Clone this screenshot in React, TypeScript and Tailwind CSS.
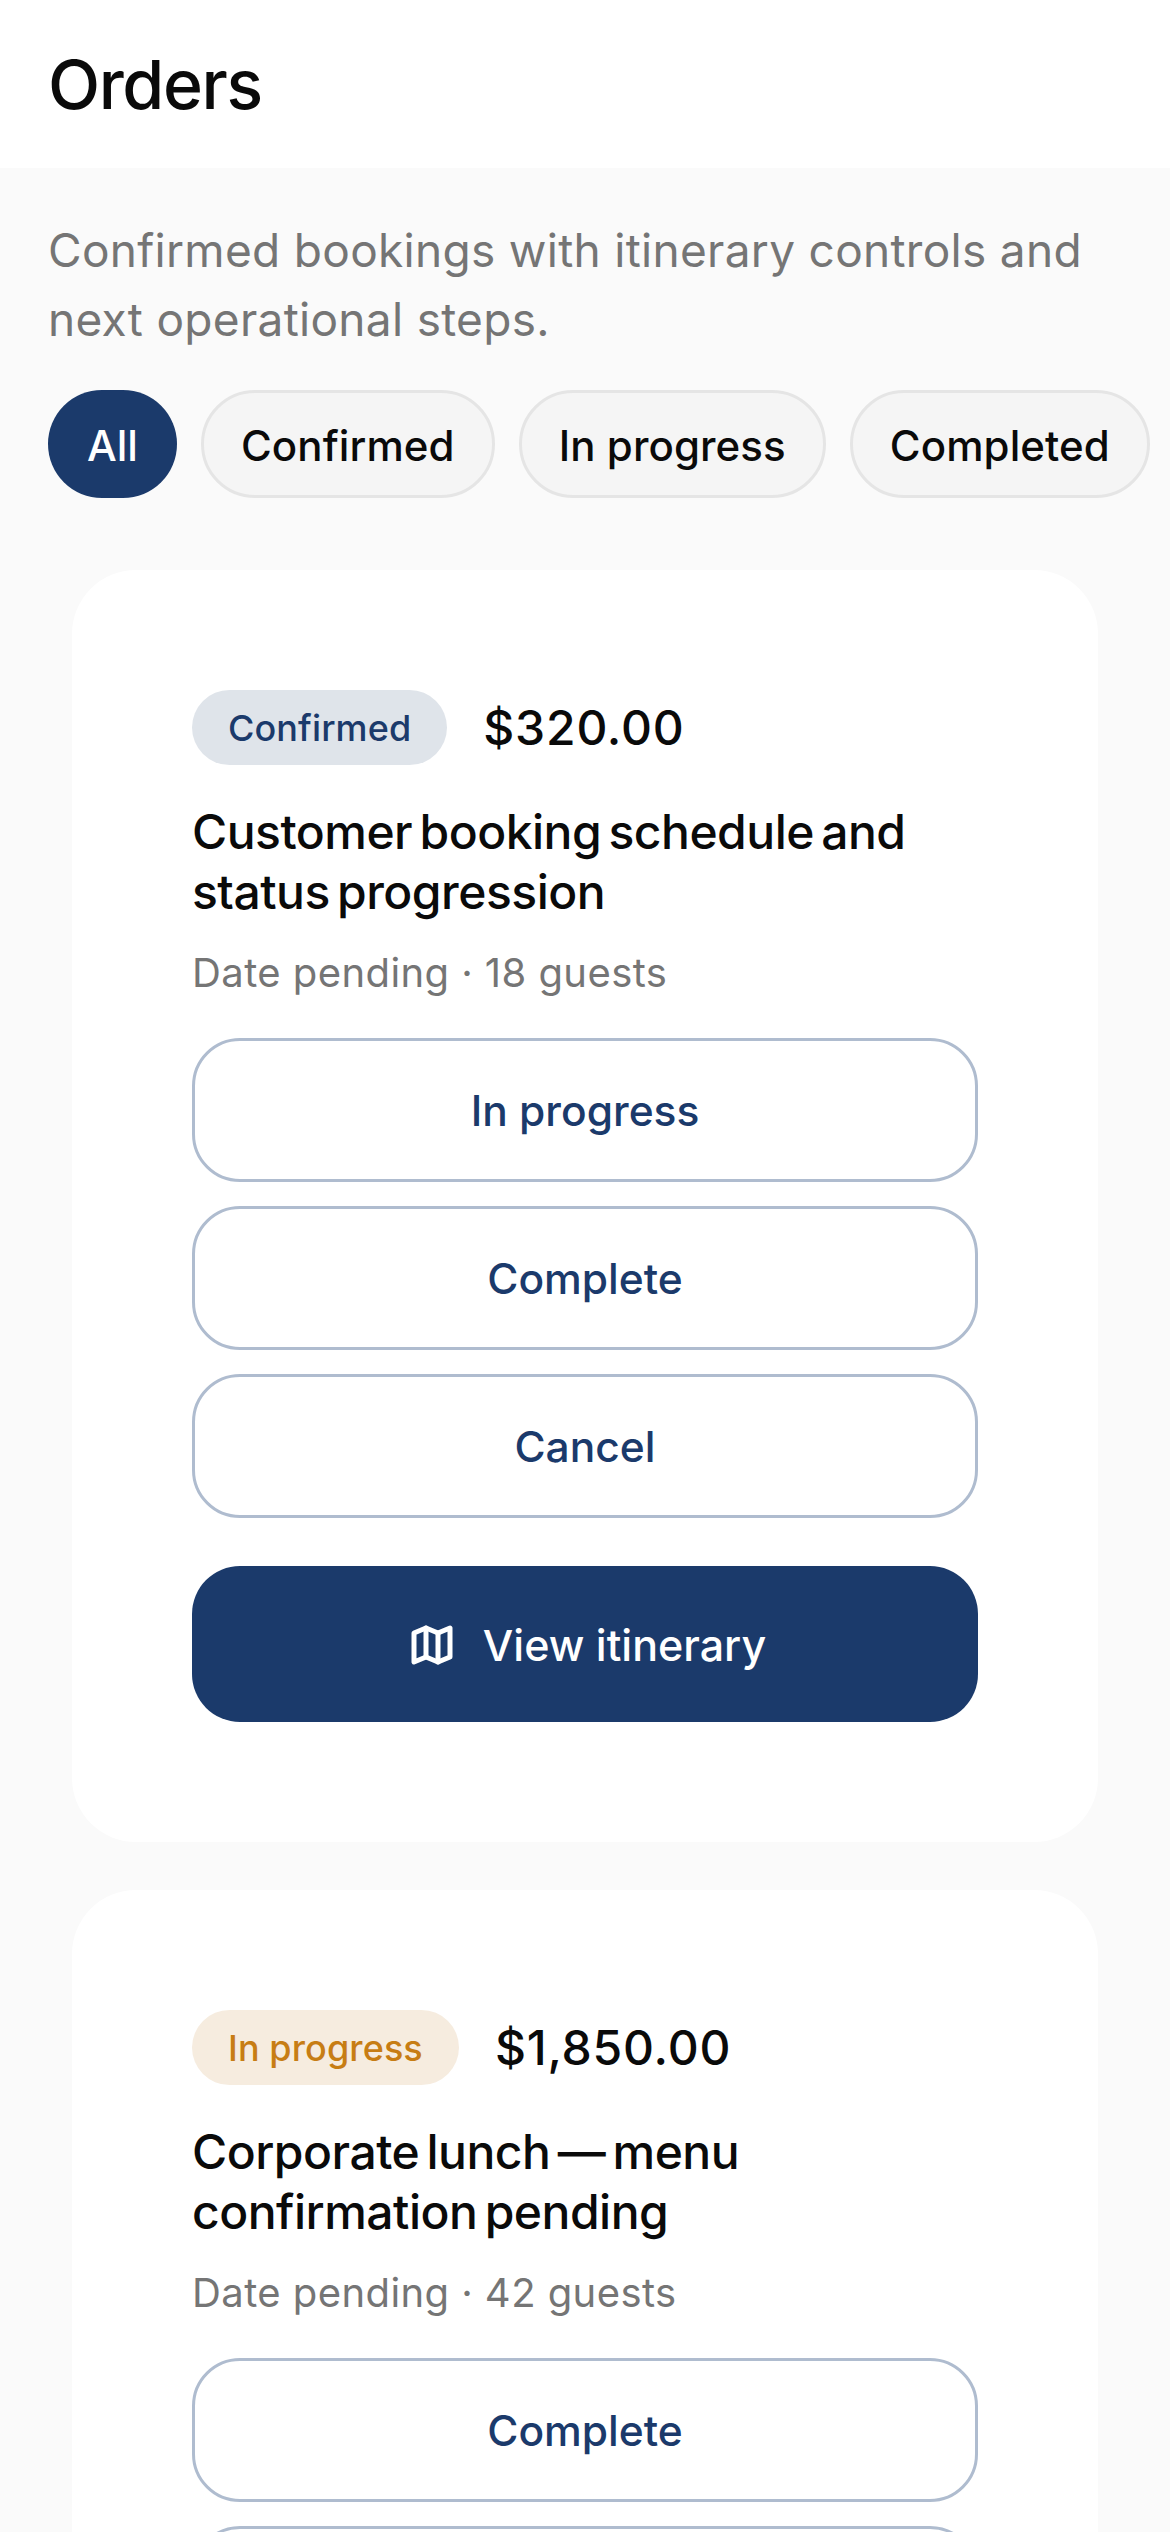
const inter = "font-['Inter',sans-serif]"

const filters = ["All", "Confirmed", "In progress", "Completed"]

const orders = [
  {
    status: "Confirmed",
    badge: "bg-[#dfe4ea] text-[#1b3a6b]",
    price: "$320.00",
    title: "Customer booking schedule and status progression",
    meta: "Date pending · 18 guests",
    actions: ["In progress", "Complete", "Cancel"],
  },
  {
    status: "In progress",
    badge: "bg-[#f6ecdf] text-[#c77d14]",
    price: "$1,850.00",
    title: "Corporate lunch — menu confirmation pending",
    meta: "Date pending · 42 guests",
    actions: ["Complete", "Cancel"],
  },
]

function MapIcon() {
  return (
    <svg width="48" height="48" viewBox="0 0 24 24" fill="none" stroke="currentColor" strokeWidth="2.5" strokeLinejoin="round" strokeLinecap="round">
      <polygon points="3 6 9 3.5 15 6 21 3.5 21 18 15 20.5 9 18 3 20.5" />
      <line x1="9" y1="3.5" x2="9" y2="18" />
      <line x1="15" y1="6" x2="15" y2="20.5" />
    </svg>
  )
}

export default function App() {
  return (
    <div className={`h-[2532px] w-[1170px] overflow-hidden bg-[#fafafa] ${inter}`}>
      <header className="flex h-[168px] items-center bg-white px-12">
        <h1 className="text-[68px] leading-none font-medium tracking-[-1.4px] text-[#0a0a0a]">Orders</h1>
      </header>

      <p className="mt-[48px] px-12 text-[46px] leading-[69px] tracking-[0.3px] text-[#757575]">
        Confirmed bookings with itinerary controls and next operational steps.
      </p>

      <div className="mt-[36px] flex gap-6 pl-12">
        {filters.map((filter, index) => (
          <button
            key={filter}
            className={
              index === 0
                ? "flex h-[108px] items-center rounded-full bg-[#1b3a6b] px-[39px] pt-[2px] text-[42px] font-medium text-white"
                : "flex h-[108px] items-center rounded-full border-[3px] border-[#e5e5e5] bg-[#f5f5f5] px-[37px] pt-[2px] text-[42px] font-medium tracking-[0.1px] text-[#0a0a0a]"
            }
          >
            {filter}
          </button>
        ))}
      </div>

      <div className="mt-[72px] flex flex-col gap-12 px-[72px]">
        {orders.map((order, index) => (
          <section key={index} className="rounded-[64px] bg-white p-[120px]">
            <div className="flex items-center gap-9">
              <span className={`flex h-[75px] items-center rounded-full px-9 text-[36px] font-medium tracking-[0.1px] ${order.badge}`}>
                {order.status}
              </span>
              <span className="text-[48px] font-medium tracking-[0.8px] text-[#0a0a0a]">{order.price}</span>
            </div>
            <h2 className="mt-[37px] text-[48px] leading-[60px] font-medium tracking-[-0.5px] [word-spacing:-5px] text-[#0a0a0a]">
              {order.title}
            </h2>
            <p className="mt-[21px] text-[40px] leading-[60px] tracking-[0.43px] text-[#757575]">{order.meta}</p>
            <div className="mt-[35px] flex flex-col gap-6">
              {order.actions.map((action) => (
                <button
                  key={action}
                  className="h-[144px] rounded-[48px] border-[3px] border-[#afbccf] bg-white pt-[2px] text-[42.5px] font-medium text-[#1b3a6b]"
                >
                  {action}
                </button>
              ))}
            </div>
            <button className="mt-12 flex h-[156px] w-full items-center justify-center gap-[27px] rounded-[48px] bg-[#1b3a6b] pt-[2px] pl-[4px] text-[43px] font-medium text-white">
              <MapIcon />
              View itinerary
            </button>
          </section>
        ))}
      </div>
    </div>
  )
}
